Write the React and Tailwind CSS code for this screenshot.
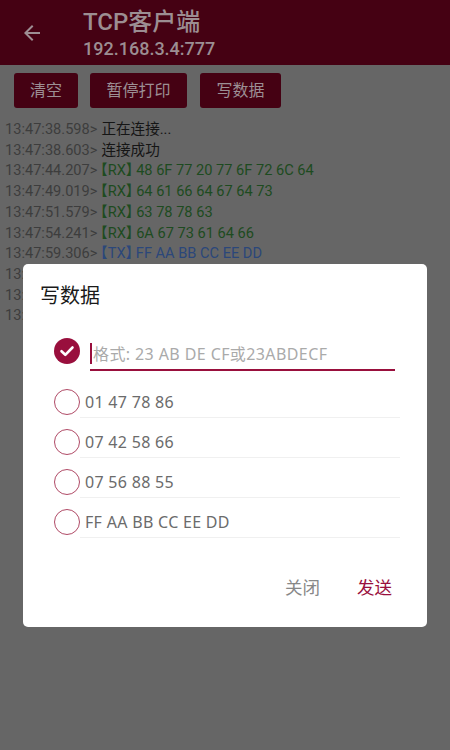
import React from "react";

const ACCENT = "#990f3d";

const logs = [
  { t: "13:47:38.598>", m: "正在连接...", c: "text-[#151515]" },
  { t: "13:47:38.603>", m: "连接成功", c: "text-[#151515]" },
  { t: "13:47:44.207>", tag: "RX", m: "48 6F 77 20 77 6F 72 6C 64", c: "text-[#1d4b20]" },
  { t: "13:47:49.019>", tag: "RX", m: "64 61 66 64 67 64 73", c: "text-[#1d4b20]" },
  { t: "13:47:51.579>", tag: "RX", m: "63 78 78 63", c: "text-[#1d4b20]" },
  { t: "13:47:54.241>", tag: "RX", m: "6A 67 73 61 64 66", c: "text-[#1d4b20]" },
  { t: "13:47:59.306>", tag: "TX", m: "FF AA BB CC EE DD", c: "text-[#2b477a]" },
  { t: "13:48:03.118>", tag: "TX", m: "07 56 88 55", c: "text-[#2b477a]" },
  { t: "13:48:06.452>", tag: "TX", m: "07 42 58 66", c: "text-[#2b477a]" },
  { t: "13:48:09.731>", tag: "TX", m: "01 47 78 86", c: "text-[#2b477a]" },
];

const options = ["01 47 78 86", "07 42 58 66", "07 56 88 55", "FF AA BB CC EE DD"];

export default function App() {
  return (
    <div className="relative w-[450px] h-[750px] overflow-hidden bg-[#666666] font-[Roboto,'Noto_Sans_CJK_SC',sans-serif]">
      {/* Header */}
      <div className="h-[65px] bg-[#450113] flex items-center">
        <div className="w-[83px] flex items-center pl-[20px]">
          <svg width="24" height="24" viewBox="0 0 24 24">
            <path
              d="M20 11H7.83l5.59-5.59L12 4l-8 8 8 8 1.41-1.41L7.83 13H20v-2z"
              fill="#9d8e93"
            />
          </svg>
        </div>
        <div className="flex flex-col text-[#9c8e92] font-medium pt-[3px]">
          <div className="text-[24px] leading-[28px]">TCP客户端</div>
          <div className="text-[18px] leading-[22px] mt-[2px]">192.168.3.4:777</div>
        </div>
      </div>

      {/* Buttons */}
      <div className="flex pl-[14px] pt-[8px] gap-[12px] text-[16px] text-[#9c8f94]">
        <div className="w-[64px] h-[35px] bg-[#450113] rounded-[3px] flex items-center justify-center">清空</div>
        <div className="w-[97px] h-[35px] bg-[#450113] rounded-[3px] flex items-center justify-center">暂停打印</div>
        <div className="w-[81px] h-[35px] bg-[#450113] rounded-[3px] flex items-center justify-center ml-[1px]">写数据</div>
      </div>

      {/* Log */}
      <div className="mt-[11px] pl-[5px] text-[14.6px] leading-[20.7px]">
        {logs.map((l, i) => (
          <div key={i} className="whitespace-pre">
            <span className="text-[#3d3d3d]">{l.t}</span>
            {l.tag ? (
              <span className={l.c}>
                <span className="ml-[3px] [font-feature-settings:'halt']">【</span>
                {l.tag}
                <span className="mr-[3px] [font-feature-settings:'halt']">】</span>
                {l.m}
              </span>
            ) : (
              <span className={l.c + " ml-[4px]"}>{l.m}</span>
            )}
          </div>
        ))}
      </div>

      {/* Dialog */}
      <div className="absolute left-[23px] top-[264px] w-[404px] h-[363px] bg-white rounded-[5px] flex flex-col pt-[18px]">
        <div className="pl-[17px] text-[20px] leading-[28px] text-[#1a1a1a]">写数据</div>

        {/* checked row with input */}
        <div className="mt-[21px] h-[40px] flex items-center pl-[31px] pr-[32px]">
          <div className="w-[26px] h-[26px] rounded-full bg-[#990f3d] flex items-center justify-center">
            <svg width="26" height="26" viewBox="0 0 26 26">
              <path d="M7.5 13.2l3.8 3.6 7.2-7.3" stroke="white" strokeWidth="2.6" fill="none" strokeLinecap="round" strokeLinejoin="round" />
            </svg>
          </div>
          <div className="ml-[10px] flex-1 h-full flex items-center border-b-2 border-[#990f3d]">
            <div className="w-[2px] h-[21px] bg-[#990f3d] mt-[6px]" />
            <span className="ml-[1px] mt-[7px] text-[16px] tracking-[0.4px] text-[#aaaaaa] font-['Noto_Sans','Noto_Sans_CJK_SC',sans-serif]">
              格式: 23 AB DE CF或23ABDECF
            </span>
          </div>
        </div>

        {/* options */}
        <div className="mt-[7px] flex flex-col pl-[31px] pr-[27px]">
          {options.map((o) => (
            <div key={o} className="h-[40px] pt-[8px] flex">
              <div className="self-center w-[26px] h-[26px] rounded-full border-[1.5px] border-[#b04a66] shrink-0" />
              <div className="flex-1 flex items-center border-b border-[#f0f0f0] text-[16px] tracking-[0.3px] text-[#6b6b6b] pl-[5px] font-['Noto_Sans',sans-serif]">
                {o}
              </div>
            </div>
          ))}
        </div>

        {/* actions */}
        <div className="mt-[28px] h-[44px] flex justify-end items-center pr-[35px] text-[17.5px]">
          <span className="text-[#888888]">关闭</span>
          <span className="ml-[37px]" style={{ color: ACCENT }}>发送</span>
        </div>
      </div>
    </div>
  );
}
